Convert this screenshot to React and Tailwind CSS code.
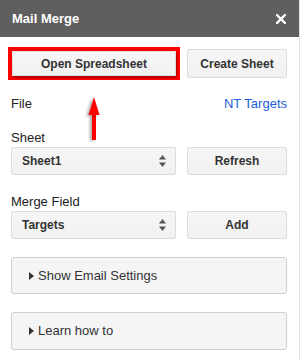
import React from "react";

function UpDown() {
  return (
    <svg width="7" height="12" viewBox="0 0 7 12" className="shrink-0">
      <path d="M3.5 0 L7 4.5 L0 4.5 Z" fill="#555" />
      <path d="M0 7.5 L7 7.5 L3.5 12 Z" fill="#555" />
    </svg>
  );
}

function Caret() {
  return (
    <svg width="5" height="8" viewBox="0 0 5 8" className="shrink-0">
      <path d="M0 0 L5 4 L0 8 Z" fill="#333" />
    </svg>
  );
}

function Btn({ children, className = "" }) {
  return (
    <button
      className={`flex items-center justify-center rounded-[2px] border border-[#dcdcdc] bg-gradient-to-b from-[#f6f6f6] to-[#f1f1f1] text-[12px] font-bold text-[#333] ${className}`}
    >
      {children}
    </button>
  );
}

function SelectBox({ value }) {
  return (
    <div className="flex h-[28px] w-[165px] items-center justify-between rounded-[2px] border border-[#dcdcdc] bg-gradient-to-b from-[#f6f6f6] to-[#f1f1f1] pl-[10px] pr-[9px] text-[12px] font-bold text-[#333]">
      <span>{value}</span>
      <UpDown />
    </div>
  );
}

function Panel({ label, className = "" }) {
  return (
    <div
      className={`flex w-[276px] items-center gap-[4px] rounded-[3px] border border-[#cfcfcf] bg-[#f5f5f5] pl-[17px] text-[13px] text-[#333] ${className}`}
    >
      <Caret />
      <span>{label}</span>
    </div>
  );
}

export default function App() {
  return (
    <div className="relative h-[359px] w-[300px] border-r border-[#e2e2e2] bg-white font-['Liberation_Sans',Arial,sans-serif]">
      <div className="flex h-[37px] items-center justify-between bg-[#5f5f5f] pl-[12px] pr-[13px]">
        <span className="text-[13px] font-bold text-white">Mail Merge</span>
        <svg width="10" height="10" viewBox="0 0 10 10">
          <path d="M1 1 L9 9 M9 1 L1 9" stroke="#fff" strokeWidth="2.4" strokeLinecap="square" />
        </svg>
      </div>

      <div className="pl-[11px]">
        <div className="mt-[10px] flex items-center">
          <div className="-ml-[3px] h-[33px] w-[172px] border-[4px] border-[#ff0000]">
            <Btn className="h-full w-full shadow-[1px_2px_2px_rgba(0,0,0,0.35)]">Open Spreadsheet</Btn>
          </div>
          <Btn className="ml-[7px] h-[29px] w-[100px]">Create Sheet</Btn>
        </div>

        <div className="mt-[16px] flex w-[276px] items-center justify-between text-[13px] leading-[16px]">
          <span className="text-[#222]">File</span>
          <span className="text-[#1a5fd6]">NT Targets</span>
        </div>

        <div className="mt-[18px] text-[13px] leading-[16px] text-[#222]">Sheet</div>
        <div className="mt-[1px] flex items-center gap-[11px]">
          <SelectBox value="Sheet1" />
          <Btn className="h-[28px] w-[100px]">Refresh</Btn>
        </div>

        <div className="mt-[19px] text-[13px] leading-[16px] text-[#222]">Merge Field</div>
        <div className="mt-[1px] flex items-center gap-[11px]">
          <SelectBox value="Targets" />
          <Btn className="h-[28px] w-[100px]">Add</Btn>
        </div>

        <Panel label="Show Email Settings" className="mt-[18px] h-[37px]" />
        <Panel label="Learn how to" className="mt-[18px] h-[38px]" />
      </div>

      <svg
        className="absolute left-[86px] top-[95px]"
        width="16"
        height="48"
        viewBox="0 0 16 48"
        style={{ filter: "drop-shadow(-2px 1px 1.5px rgba(0,0,0,0.35))" }}
      >
        <path d="M8 2 L13.5 20 L10 20 L10 45 L6 45 L6 20 L2.5 20 Z" fill="#ff0000" />
      </svg>
    </div>
  );
}
